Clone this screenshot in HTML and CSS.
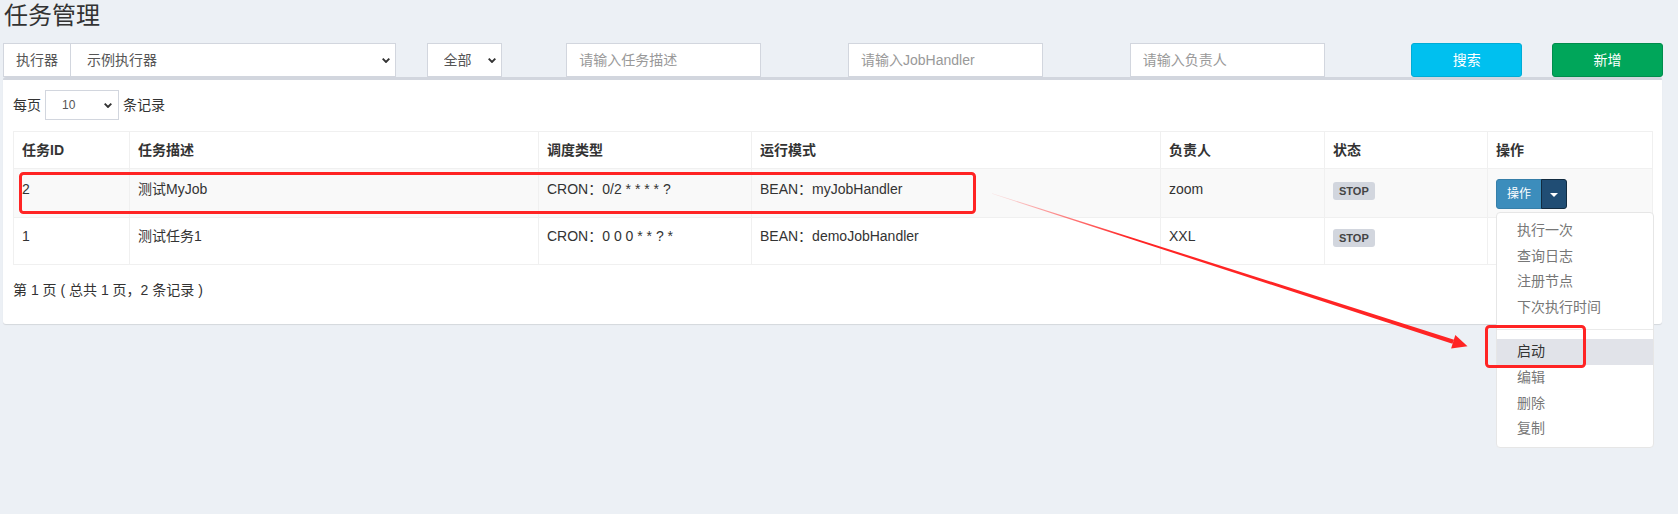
FILE: index.html
```html
<!DOCTYPE html>
<html lang="zh-CN">
<head>
<meta charset="utf-8">
<title>任务管理</title>
<link rel="stylesheet" href="styles.css">
</head>
<body>
<div class="page">
  <h1 class="title">任务管理</h1>

  <div class="filters">
    <div class="cell span3">
      <div class="input-group">
        <span class="addon">执行器</span>
        <div class="select-wrap grow">
          <select class="control"><option>示例执行器</option></select>
          <svg class="chev" viewBox="0 0 8 5"><path d="M0.7 0.7 L4 4 L7.3 0.7" /></svg>
        </div>
      </div>
    </div>
    <div class="cell span1">
      <div class="select-wrap w-status">
        <select class="control"><option>全部</option></select>
        <svg class="chev" viewBox="0 0 8 5"><path d="M0.7 0.7 L4 4 L7.3 0.7" /></svg>
      </div>
    </div>
    <div class="cell span2"><input class="control text-input" type="text" placeholder="请输入任务描述"></div>
    <div class="cell span2"><input class="control text-input" type="text" placeholder="请输入JobHandler"></div>
    <div class="cell span2"><input class="control text-input" type="text" placeholder="请输入负责人"></div>
    <div class="cell span1"><button class="btn btn-info" type="button">搜索</button></div>
    <div class="cell span1"><button class="btn btn-success" type="button">新增</button></div>
  </div>

  <div class="box">
    <div class="length">
      <span>每页</span>
      <div class="select-wrap w-len">
        <select class="control control-sm"><option>10</option></select>
        <svg class="chev chev-sm" viewBox="0 0 8 5"><path d="M0.7 0.7 L4 4 L7.3 0.7" /></svg>
      </div>
      <span>条记录</span>
    </div>

    <table class="grid">
      <colgroup>
        <col class="c-id"><col class="c-desc"><col class="c-type"><col class="c-mode"><col class="c-owner"><col class="c-status"><col class="c-op">
      </colgroup>
      <thead>
        <tr><th>任务ID</th><th>任务描述</th><th>调度类型</th><th>运行模式</th><th>负责人</th><th>状态</th><th>操作</th></tr>
      </thead>
      <tbody>
        <tr>
          <td>2</td>
          <td>测试MyJob</td>
          <td>CRON：0/2 * * * * ?</td>
          <td>BEAN：myJobHandler</td>
          <td>zoom</td>
          <td><span class="label">STOP</span></td>
          <td>
            <div class="btn-group">
              <button class="btn-sm btn-primary" type="button">操作</button>
              <button class="btn-sm btn-primary-dark" type="button"><span class="caret"></span></button>
              <ul class="dropdown">
                <li><a>执行一次</a></li>
                <li><a>查询日志</a></li>
                <li><a>注册节点</a></li>
                <li><a>下次执行时间</a></li>
                <li class="divider"></li>
                <li class="hover"><a>启动</a></li>
                <li><a>编辑</a></li>
                <li><a>删除</a></li>
                <li><a>复制</a></li>
              </ul>
            </div>
          </td>
        </tr>
        <tr>
          <td>1</td>
          <td>测试任务1</td>
          <td>CRON：0 0 0 * * ? *</td>
          <td>BEAN：demoJobHandler</td>
          <td>XXL</td>
          <td><span class="label">STOP</span></td>
          <td>
            <div class="btn-group is-covered">
              <button class="btn-sm btn-primary" type="button">操作</button>
              <button class="btn-sm btn-primary" type="button"><span class="caret"></span></button>
            </div>
          </td>
        </tr>
      </tbody>
    </table>

    <div class="info">第 1 页 ( 总共 1 页，2 条记录 )</div>
  </div>
</div>

<svg class="annot" viewBox="0 0 1678 514" width="1678" height="514">
  <defs>
    <linearGradient id="fade" gradientUnits="userSpaceOnUse" x1="992" y1="193.5" x2="1130" y2="238">
      <stop offset="0" stop-color="#ff2424" stop-opacity="0.08"/>
      <stop offset="1" stop-color="#ff2424" stop-opacity="1"/>
    </linearGradient>
  </defs>
  <rect x="20.5" y="173.5" width="954" height="39" rx="3" ry="3" fill="none" stroke="#ff2424" stroke-width="3"/>
  <rect x="1486.5" y="326.5" width="98" height="40" rx="3" ry="3" fill="none" stroke="#ff2424" stroke-width="3"/>
  <polygon points="991.9,193.8 992.1,193.2 1454.1,339.7 1452.4,343.7" fill="url(#fade)"/>
  <polygon points="1455.3,335.0 1467.5,346.3 1451.1,348.4" fill="#ff2424"/>
</svg>
</body>
</html>
```

FILE: styles.css
```css
* { box-sizing: border-box; }

html, body {
  margin: 0;
  padding: 0;
}

body {
  width: 1678px;
  height: 514px;
  overflow: hidden;
  position: relative;
  background: #ecf0f5;
  font-family: "Liberation Sans", "Noto Sans CJK SC", sans-serif;
  font-size: 14px;
  line-height: 20px;
  color: #333;
}

.page {
  padding: 3px 16px 0 3px;
}

.title {
  margin: 0;
  padding-left: 1px;
  font-size: 24px;
  line-height: 26px;
  font-weight: normal;
  color: #333;
}

/* filter row: 12-column grid like bootstrap */
.filters {
  display: grid;
  grid-template-columns: repeat(12, 1fr);
  margin: 14px -16px 0 -15px;
}

.cell { padding: 0 15px; }
.span1 { grid-column: span 1; }
.span2 { grid-column: span 2; }
.span3 { grid-column: span 3; }

.control {
  display: block;
  height: 34px;
  padding: 6px 12px;
  border: 1px solid #d2d6de;
  border-radius: 0;
  background: #fff;
  font: inherit;
  color: #555;
  outline: none;
}

select.control {
  -webkit-appearance: none;
  appearance: none;
  width: 100%;
  padding-left: 16px;
}

.control-sm {
  height: 30px;
  padding: 5px 10px 5px 17px;
  font-size: 12px;
  line-height: 18px;
}

.select-wrap { position: relative; }

.chev {
  position: absolute;
  right: 6px;
  top: 50%;
  width: 8px;
  height: 5px;
  margin-top: -2px;
  fill: none;
  stroke: #333;
  stroke-width: 1.9;
  pointer-events: none;
}

.chev-sm { right: 7px; }

.input-group { display: flex; }

.addon {
  height: 34px;
  padding: 6px 12px;
  border: 1px solid #d2d6de;
  border-right: 0;
  background: #fff;
  color: #555;
  white-space: nowrap;
}

.grow { flex: 1; }

.w-status { width: 75px; margin-left: 1px; }

.text-input { width: 195px; }
.text-input::placeholder { color: #999; }

.btn {
  display: block;
  width: 100%;
  height: 34px;
  border: 1px solid;
  border-radius: 3px;
  color: #fff;
  font: inherit;
  padding: 0;
}

.btn-info { background: #00c0ef; border-color: #00acd6; }
.btn-success { background: #00a65a; border-color: #008d4c; }

/* box panel */
.box {
  background: #fff;
  border-top: 3px solid #d2d6de;
  border-radius: 3px;
  box-shadow: 0 1px 1px rgba(0, 0, 0, 0.1);
  padding: 10px;
}

.length {
  display: flex;
  align-items: center;
  gap: 4px;
  height: 30px;
}

.w-len { width: 74px; }

/* table */
.grid {
  width: 100%;
  table-layout: fixed;
  border-collapse: collapse;
  margin-top: 11px;
  margin-bottom: 15px;
}

.c-id { width: 116px; }
.c-desc { width: 409px; }
.c-type { width: 213px; }
.c-mode { width: 409px; }
.c-owner { width: 164px; }
.c-status { width: 163px; }
.c-op { width: 165px; }

.grid th,
.grid td {
  border: 1px solid #f0f0f0;
  text-align: left;
  vertical-align: top;
  line-height: 20px;
  white-space: nowrap;
}

.grid th {
  padding: 8px;
  font-weight: bold;
}

.grid td {
  padding: 10px 8px 8px;
}

.grid tbody tr + tr td {
  padding-top: 8px;
}

.grid tbody tr:nth-child(odd) { background: #f9f9f9; }

.label {
  display: inline-block;
  vertical-align: top;
  margin-top: 3px;
  padding: 3px 6px;
  border-radius: 3px;
  background: #d2d6de;
  color: #444;
  font-size: 11px;
  font-weight: bold;
  line-height: 12px;
}

.btn-group {
  position: relative;
  display: inline-flex;
  vertical-align: top;
}

/* row 2's button sits under the open menu of row 1 */
.btn-group.is-covered { visibility: hidden; }

.btn-sm {
  height: 30px;
  padding: 5px 10px;
  border: 1px solid #367fa9;
  font: inherit;
  font-size: 12px;
  line-height: 18px;
  color: #fff;
}

.btn-primary {
  background: #3c8dbc;
  border-radius: 3px 0 0 3px;
}

.btn-group .btn-primary + .btn-primary,
.btn-primary-dark {
  padding: 5px 8px;
  border-radius: 0 3px 3px 0;
  margin-left: -1px;
}

.btn-primary-dark {
  background: #204d74;
  border-color: #122b40;
}

.caret {
  display: inline-block;
  width: 0;
  height: 0;
  vertical-align: middle;
  border-top: 4px solid #fff;
  border-left: 4px solid transparent;
  border-right: 4px solid transparent;
}

.dropdown {
  position: absolute;
  top: 100%;
  left: 0;
  z-index: 10;
  min-width: 158px;
  margin: 3px 0 0;
  padding: 5px 0;
  list-style: none;
  background: #fff;
  border: 1px solid #e6e6e6;
  border-radius: 4px;
}

.dropdown li a {
  display: block;
  padding: 3px 20px;
  line-height: 19.6px;
  color: #777;
  white-space: nowrap;
}

.dropdown li.hover a {
  background: #e1e3e9;
  color: #333;
}

.dropdown .divider {
  height: 1px;
  margin: 9px 0;
  background: #eaeaea;
}

.info {
  line-height: 20px;
  margin-bottom: 14px;
}

/* annotation overlay */
.annot {
  position: absolute;
  top: 0;
  left: 0;
  pointer-events: none;
  z-index: 20;
}
```
